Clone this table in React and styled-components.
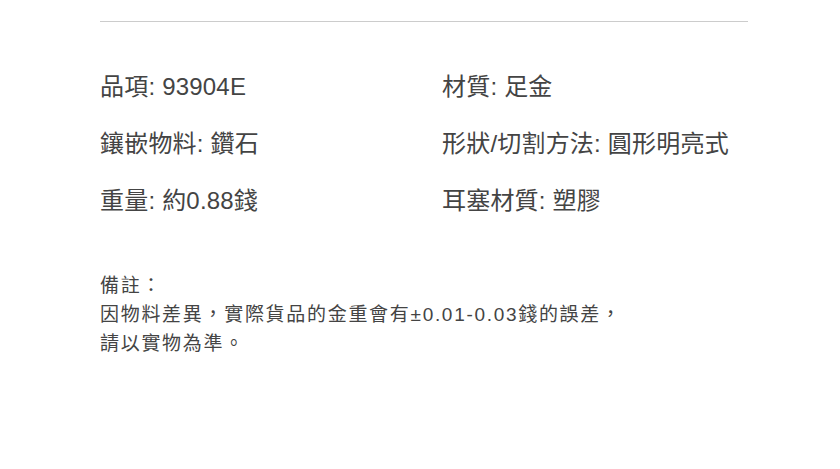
import styled, { createGlobalStyle } from 'styled-components';

const GlobalStyle = createGlobalStyle`
    body {
        margin: 0;
        background: #ffffff;
        font-family: "Liberation Sans", "Noto Sans CJK TC", sans-serif;
        color: #444444;
    }
`;

const Section = styled.section`
    width: 648px;
    margin: 21px 0 0 100px;
    border-top: 1px solid #cccccc;
    padding-top: 47px;
`;

const SpecGrid = styled.div`
    display: grid;
    grid-template-columns: 342px 1fr;
    row-gap: 21px;
`;

const SpecItem = styled.div`
    font-size: 24px;
    line-height: 36px;
    letter-spacing: 0.2px;
    color: #444444;
    white-space: nowrap;
`;

const Notes = styled.div`
    margin-top: 52px;
    font-size: 19px;
    line-height: 29px;
    letter-spacing: 1.7px;
    color: #444444;
`;

const NoteLine = styled.p`
    margin: 0;
    white-space: nowrap;
`;

const specs = [
    ['品項', '93904E'],
    ['材質', '足金'],
    ['鑲嵌物料', '鑽石'],
    ['形狀/切割方法', '圓形明亮式'],
    ['重量', '約0.88錢'],
    ['耳塞材質', '塑膠'],
];

function App(){
    return(
        <>
            <GlobalStyle/>
            <Section>
                <SpecGrid>
                    {specs.map(([label, value]) => (
                        <SpecItem key={label}>{label}: {value}</SpecItem>
                    ))}
                </SpecGrid>
                <Notes>
                    <NoteLine>備註：</NoteLine>
                    <NoteLine>因物料差異，實際貨品的金重會有±0.01-0.03錢的誤差，</NoteLine>
                    <NoteLine>請以實物為準。</NoteLine>
                </Notes>
            </Section>
        </>
    );
}

export default App;
